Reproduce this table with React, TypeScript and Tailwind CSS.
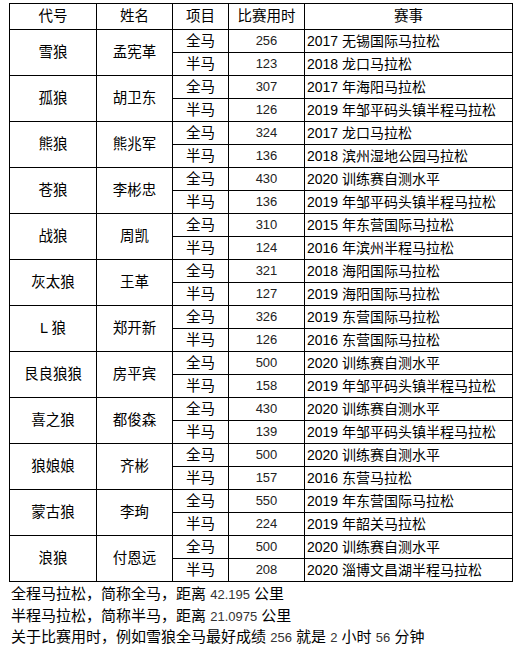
import React from "react";

type Row = {
  code: string;
  name: string;
  full: [string, string];
  half: [string, string];
};

const rows: Row[] = [
  { code: "雪狼", name: "孟宪革", full: ["256", "2017 无锡国际马拉松"], half: ["123", "2018 龙口马拉松"] },
  { code: "孤狼", name: "胡卫东", full: ["307", "2017 年海阳马拉松"], half: ["126", "2019 年邹平码头镇半程马拉松"] },
  { code: "熊狼", name: "熊兆军", full: ["324", "2017 龙口马拉松"], half: ["136", "2018 滨州湿地公园马拉松"] },
  { code: "苍狼", name: "李彬忠", full: ["430", "2020 训练赛自测水平"], half: ["136", "2019 年邹平码头镇半程马拉松"] },
  { code: "战狼", name: "周凯", full: ["310", "2015 年东营国际马拉松"], half: ["124", "2016 年滨州半程马拉松"] },
  { code: "灰太狼", name: "王革", full: ["321", "2018 海阳国际马拉松"], half: ["127", "2019 海阳国际马拉松"] },
  { code: "L 狼", name: "郑开新", full: ["326", "2019 东营国际马拉松"], half: ["126", "2016 东营国际马拉松"] },
  { code: "艮良狼狼", name: "房平宾", full: ["500", "2020 训练赛自测水平"], half: ["158", "2019 年邹平码头镇半程马拉松"] },
  { code: "喜之狼", name: "都俊森", full: ["430", "2020 训练赛自测水平"], half: ["139", "2019 年邹平码头镇半程马拉松"] },
  { code: "狼娘娘", name: "齐彬", full: ["500", "2020 训练赛自测水平"], half: ["157", "2016 东营马拉松"] },
  { code: "蒙古狼", name: "李珣", full: ["550", "2019 年东营国际马拉松"], half: ["224", "2019 年韶关马拉松"] },
  { code: "浪狼", name: "付恩远", full: ["500", "2020 训练赛自测水平"], half: ["208", "2020 淄博文昌湖半程马拉松"] },
];

const cell = "border border-black p-0 text-center align-middle";
const num = "text-[13px] text-[#222]";

export default function App() {
  return (
    <div className="w-[520px] h-[656px] bg-white text-black font-['Liberation_Sans','Noto_Sans_CJK_SC',sans-serif] text-[14.5px] overflow-hidden">
      <div className="pl-[9px] pt-[3px]">
        <table className="table-fixed border-collapse w-[503px]">
          <colgroup>
            <col className="w-[87px]" />
            <col className="w-[76px]" />
            <col className="w-[56px]" />
            <col className="w-[76px]" />
            <col className="w-[208px]" />
          </colgroup>
          <thead>
            <tr className="h-[26px]">
              <th className={`${cell} font-normal`}>代号</th>
              <th className={`${cell} font-normal`}>姓名</th>
              <th className={`${cell} font-normal`}>项目</th>
              <th className={`${cell} font-normal`}>比赛用时</th>
              <th className={`${cell} font-normal`}>赛事</th>
            </tr>
          </thead>
          <tbody>
            {rows.map((r) => (
              <React.Fragment key={r.code}>
                <tr className="h-[23px]">
                  <td rowSpan={2} className={cell}>{r.code}</td>
                  <td rowSpan={2} className={cell}>{r.name}</td>
                  <td className={`${cell} leading-[22px]`}>全马</td>
                  <td className={`${cell} ${num}`}>{r.full[0]}</td>
                  <td className={`${cell} text-left pl-[2px] whitespace-nowrap leading-[22px] text-[14px]`}>{r.full[1]}</td>
                </tr>
                <tr className="h-[23px]">
                  <td className={`${cell} leading-[22px]`}>半马</td>
                  <td className={`${cell} ${num}`}>{r.half[0]}</td>
                  <td className={`${cell} text-left pl-[2px] whitespace-nowrap leading-[22px] text-[14px]`}>{r.half[1]}</td>
                </tr>
              </React.Fragment>
            ))}
          </tbody>
        </table>
      </div>
      <div className="pl-[11px] pt-[2px] leading-[20.5px] text-[15px]">
        <p>全程马拉松，简称全马，距离 <span className="text-[13px] text-[#333]">42.195</span> 公里</p>
        <p>半程马拉松，简称半马，距离 <span className="text-[13px] text-[#333]">21.0975</span> 公里</p>
        <p>
          关于比赛用时，例如雪狼全马最好成绩 <span className="text-[13px] text-[#333]">256</span> 就是{" "}
          <span className="text-[13px] text-[#333]">2</span> 小时{" "}
          <span className="text-[13px] text-[#333]">56</span> 分钟
        </p>
      </div>
    </div>
  );
}
